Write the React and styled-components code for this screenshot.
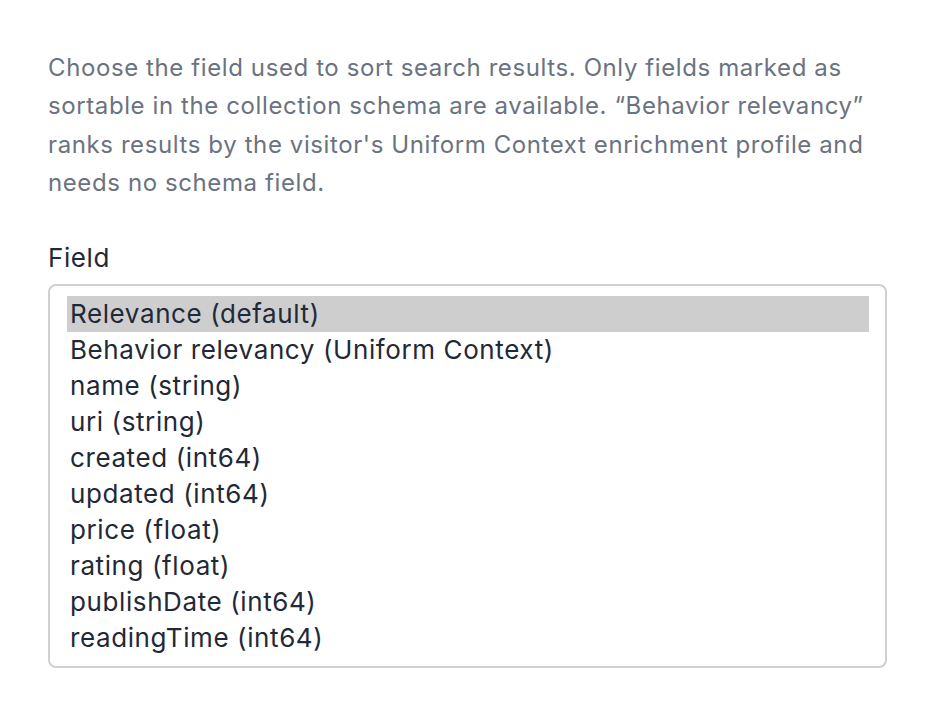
import React, { useState } from "react";
import styled, { createGlobalStyle } from "styled-components";

const fields = [
  "Relevance (default)",
  "Behavior relevancy (Uniform Context)",
  "name (string)",
  "uri (string)",
  "created (int64)",
  "updated (int64)",
  "price (float)",
  "rating (float)",
  "publishDate (int64)",
  "readingTime (int64)",
];

const App = () => {
  const [selected, setSelected] = useState(0);

  return (
    <Page>
      <GlobalStyle />
      <Help>
        Choose the field used to sort search results. Only fields marked as
        sortable in the collection schema are available. “Behavior relevancy”
        ranks results by the visitor's Uniform Context enrichment profile and
        needs no schema field.
      </Help>
      <Label>Field</Label>
      <ListBox role="listbox">
        {fields.map((f, i) => (
          <Option
            key={f}
            role="option"
            aria-selected={selected === i}
            $selected={selected === i}
            onClick={() => setSelected(i)}
          >
            {f}
          </Option>
        ))}
      </ListBox>
    </Page>
  );
};

const GlobalStyle = createGlobalStyle`
  body {
    margin: 0;
    background: #ffffff;
    font-family: Inter, "Noto Sans", sans-serif;
  }
`;

const Page = styled.div`
  padding: 49px 49px 40px 48px;
  display: flex;
  flex-direction: column;
`;

const Help = styled.p`
  margin: 0;
  font-size: 24px;
  line-height: 38.4px;
  letter-spacing: 0.6px;
  color: #6b7280;
  max-width: 830px;
`;

const Label = styled.div`
  margin-top: 37px;
  font-size: 26px;
  line-height: 36px;
  letter-spacing: 0.6px;
  color: #1f2937;
`;

const ListBox = styled.div`
  margin-top: 8px;
  border: 2px solid #d0d0d0;
  border-radius: 8px;
  padding: 10px 16px 10px 17px;
  display: flex;
  flex-direction: column;
`;

const Option = styled.div`
  font-size: 26px;
  line-height: 36px;
  letter-spacing: 0.6px;
  padding: 0 3px;
  color: #1f2937;
  cursor: default;
  background: ${(p) => (p.$selected ? "#cecece" : "transparent")};
`;

export default App;
